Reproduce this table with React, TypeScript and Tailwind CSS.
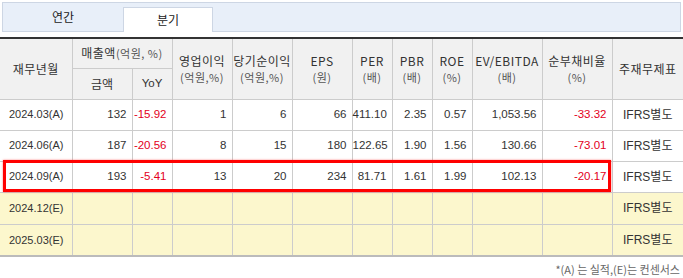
import React from "react";

type Row = {
    date: string;
    values: string[];
    est?: boolean;
};

const rows: Row[] = [
    { date: "2024.03(A)", values: ["132", "-15.92", "1", "6", "66", "411.10", "2.35", "0.57", "1,053.56", "-33.32"] },
    { date: "2024.06(A)", values: ["187", "-20.56", "8", "15", "180", "122.65", "1.90", "1.56", "130.66", "-73.01"] },
    { date: "2024.09(A)", values: ["193", "-5.41", "13", "20", "234", "81.71", "1.61", "1.99", "102.13", "-20.17"] },
    { date: "2024.12(E)", values: ["", "", "", "", "", "", "", "", "", ""], est: true },
    { date: "2025.03(E)", values: ["", "", "", "", "", "", "", "", "", ""], est: true },
];

const widths = [72, 60, 40, 60, 60, 60, 40, 40, 40, 70, 70, 71];

const ko = "font-['Noto_Sans_CJK_KR',sans-serif]";
const num = "font-['Liberation_Sans','Noto_Sans_CJK_KR',sans-serif]";

function Head({ title, unit }: { title: string; unit?: string }) {
    return (
        <th rowSpan={2} className="border border-[#cccccc] bg-[#f1f1f1] font-normal text-[#333]">
            <div className="text-[12px] leading-[17px] tracking-[0.5px]">{title}</div>
            {unit && <div className="text-[11px] leading-[16px] text-[#555] tracking-[0.5px]">{unit}</div>}
        </th>
    );
}

export default function App() {
    return (
        <div className={`w-[683px] h-[278px] bg-white ${ko}`}>
            {/* Tabs */}
            <div className="mx-[2px] mt-[2px] h-[30px] flex items-end border border-[#cdd6e4] bg-[#e8eff9]">
                <div className="w-[120px] h-full flex items-center justify-center text-[12px] text-[#222]">연간</div>
                <div className="w-[90px] h-[25px] mb-[-1px] flex items-center justify-center bg-white border border-b-0 border-[#cdd6e4] text-[12px] text-[#222]">
                    분기
                </div>
            </div>

            {/* Table */}
            <div className="relative mt-[5px]">
                <table className="table-fixed border-collapse w-[683px] border-t-2 border-t-[#333] border-b-2 border-b-[#bbbbbb]">
                    <colgroup>
                        {widths.map((w, i) => (
                            <col key={i} style={{ width: w }} />
                        ))}
                    </colgroup>
                    <thead>
                        <tr className="h-[30px]">
                            <th rowSpan={2} className="border border-l-0 border-[#cccccc] bg-[#f1f1f1] font-normal text-[12px] text-[#333] tracking-[0.5px]">
                                재무년월
                            </th>
                            <th colSpan={2} className="border border-[#cccccc] bg-[#f1f1f1] font-normal text-[12px] text-[#333] tracking-[0.5px]">
                                매출액<span className="text-[11px] text-[#555]">(억원, %)</span>
                            </th>
                            <Head title="영업이익" unit="(억원,%)" />
                            <Head title="당기순이익" unit="(억원,%)" />
                            <Head title="EPS" unit="(원)" />
                            <Head title="PER" unit="(배)" />
                            <Head title="PBR" unit="(배)" />
                            <Head title="ROE" unit="(%)" />
                            <Head title="EV/EBITDA" unit="(배)" />
                            <Head title="순부채비율" unit="(%)" />
                            <th rowSpan={2} className="border border-r-0 border-[#cccccc] bg-[#f1f1f1] font-normal text-[12px] text-[#333] tracking-[0.5px]">
                                주재무제표
                            </th>
                        </tr>
                        <tr className="h-[31px]">
                            <th className="border border-[#cccccc] bg-[#f1f1f1] font-normal text-[12px] text-[#333]">금액</th>
                            <th className={`border border-[#cccccc] bg-[#f1f1f1] font-normal text-[11.5px] text-[#333] ${num}`}>YoY</th>
                        </tr>
                    </thead>
                    <tbody>
                        {rows.map((r) => (
                            <tr key={r.date} className={r.est ? "h-[32px] bg-[#fcf7cd]" : "h-[31px] bg-white"}>
                                <td className={`border border-l-0 border-[#cccccc] pl-[9px] text-[11px] text-[#333] ${num}`}>{r.date}</td>
                                {r.values.map((v, i) => (
                                    <td
                                        key={i}
                                        className={`border border-[#cccccc] pr-[5px] text-right text-[11.5px] ${num} ${
                                            v.startsWith("-") ? "text-[#e3001b]" : "text-[#333]"
                                        }`}
                                    >
                                        {v}
                                    </td>
                                ))}
                                <td className={`border border-r-0 border-[#cccccc] text-center text-[12px] text-[#333] ${num}`}>
                                    IFRS별도
                                </td>
                            </tr>
                        ))}
                    </tbody>
                </table>

                {/* highlighted row marker */}
                <div className="absolute left-[3px] top-[123px] w-[608px] h-[32px] border-[3px] border-[#ff0000] shadow-[0_0_2px_rgba(255,0,0,0.5)] pointer-events-none" />
            </div>

            <p className="mt-[4px] pr-[3px] text-right text-[11px] text-[#666]">*(A) 는 실적,(E)는 컨센서스</p>
        </div>
    );
}
